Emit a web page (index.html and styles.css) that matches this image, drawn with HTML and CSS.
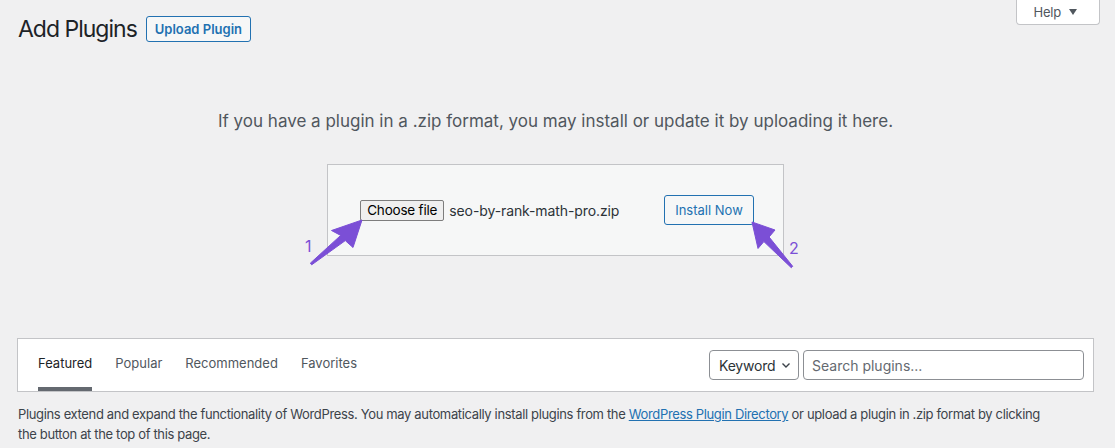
FILE: index.html
```html
<!DOCTYPE html>
<html lang="en">
<head>
    <meta charset="UTF-8">
    <meta name="viewport" content="width=device-width, initial-scale=1.0">
    <title>Add Plugins</title>
    <link rel="stylesheet" href="styles.css">
</head>
<body>
    <div class="screen-meta-links">
        <button class="show-settings">Help
            <svg width="8" height="6" viewBox="0 0 8 6"><path d="M0 0h8L4 6z" fill="#50575e"/></svg>
        </button>
    </div>

    <div class="wrap">
        <div class="page-head">
            <h1>Add Plugins</h1>
            <a class="page-title-action" href="#">Upload Plugin</a>
        </div>

        <div class="upload-plugin">
            <p class="install-help">If you have a plugin in a .zip format, you may install or update it by uploading it here.</p>
            <div class="upload-row">
                <form class="wp-upload-form">
                    <div class="file-field">
                        <span class="file-btn">Choose file</span>
                        <span class="file-name">seo-by-rank-math-pro.zip</span>
                    </div>
                    <button type="button" class="button">Install Now</button>
                </form>
            </div>
        </div>

        <div class="wp-filter">
            <ul class="filter-links">
                <li><a class="current" href="#">Featured</a></li>
                <li><a href="#">Popular</a></li>
                <li><a href="#">Recommended</a></li>
                <li><a href="#">Favorites</a></li>
            </ul>
            <div class="search-form">
                <div class="select">
                    <span>Keyword</span>
                    <svg class="chevron" width="10" height="7" viewBox="0 0 10 7"><path d="M1.5 1.5l3.5 3.5 3.5-3.5" fill="none" stroke="#3c434a" stroke-width="1.4"/></svg>
                </div>
                <input class="search-input" type="search" placeholder="Search plugins...">
            </div>
        </div>

        <p class="intro">Plugins extend and expand the functionality of WordPress. You may automatically install plugins from the <a href="#">WordPress Plugin Directory</a> or upload a plugin in .zip format by clicking the button at the top of this page.</p>
    </div>

    <!-- annotation arrows -->
    <svg class="marks" width="1115" height="448" viewBox="0 0 1115 448">
        <g fill="#7b4fd6" stroke="#7b4fd6" stroke-width="1" stroke-linejoin="round">
            <polygon points="362,220 331.5,230.5 340.7,235.4 310.3,263.2 311.7,264.8 345.3,240.6 353,247.5"/>
            <polygon points="752,222 775,230 769.1,237 792.7,266.3 791.3,267.7 763.9,241.6 758,248.5"/>
        </g>
        <text x="305" y="252" class="mark-num">1</text>
        <text x="789" y="254" class="mark-num">2</text>
    </svg>
</body>
</html>
```

FILE: styles.css
```css
body {
    margin: 0;
    padding: 0;
    background: #f0f0f1;
    color: #3c434a;
    font-family: Inter, "Noto Sans", sans-serif;
    font-size: 13px;
    position: relative;
    min-height: 448px;
}
a {
    color: #2271b1;
}
/* Help tab */
.screen-meta-links {
    float: right;
    margin-right: 15px;
}
.show-settings {
    display: flex;
    align-items: center;
    gap: 8px;
    height: 25px;
    padding: 0 22px 1px 16px;
    background: #fff;
    border: 1px solid #c3c4c7;
    border-top: none;
    border-radius: 0 0 4px 4px;
    color: #50575e;
    font-family: inherit;
    font-size: 13px;
    letter-spacing: -0.2px;
}
.wrap {
    padding: 16px 21px 0 17px;
}
.page-head {
    display: flex;
    align-items: center;
    gap: 9px;
}
.page-head h1 {
    margin: 0 0 0 1px;
    font-size: 23px;
    font-weight: 400;
    line-height: 26px;
    letter-spacing: -1px;
    color: #1d2327;
}
.page-title-action {
    padding: 0 8px;
    line-height: 24px;
    border: 1px solid #2271b1;
    border-radius: 3px;
    background: #f6f7f7;
    font-size: 13px;
    font-weight: 600;
    text-decoration: none;
}
/* Upload box */
.upload-plugin {
    text-align: center;
}
.install-help {
    margin: 67px 0 31px;
    font-size: 17px;
    line-height: 24px;
    color: #50575e;
}
.upload-row {
    display: flex;
    justify-content: center;
}
.wp-upload-form {
    display: flex;
    align-items: center;
    margin: 0;
    padding: 30px 29px 30px 32px;
    border: 1px solid #c3c4c7;
    background: #f6f7f7;
}
.file-field {
    display: flex;
    align-items: center;
    gap: 5px;
    width: 304px;
}
.file-btn {
    padding: 0 6px;
    height: 19px;
    line-height: 19px;
    border: 1px solid #7d7d7d;
    border-radius: 2px;
    background: #efefef;
    color: #000;
    font-size: 13.5px;
    letter-spacing: -0.2px;
}
.file-name {
    color: #2c3338;
    font-size: 14px;
    letter-spacing: -0.1px;
}
.button {
    height: 30px;
    padding: 0 10px;
    border: 1px solid #2271b1;
    border-radius: 3px;
    background: #f6f7f7;
    color: #2271b1;
    font-family: inherit;
    font-size: 13px;
}
/* Filter bar */
.wp-filter {
    display: flex;
    justify-content: space-between;
    align-items: center;
    margin-top: 82px;
    padding: 0 9px 0 20px;
    background: #fff;
    border: 1px solid #c3c4c7;
}
.filter-links {
    display: flex;
    gap: 23px;
    margin: 0;
    padding: 0;
    list-style: none;
}
.filter-links a {
    display: block;
    padding: 15px 0;
    line-height: 18px;
    border-bottom: 4px solid #fff;
    color: #50575e;
    text-decoration: none;
}
.filter-links a.current {
    color: #1d2327;
    border-bottom-color: #646970;
}
.search-form {
    display: flex;
    gap: 4px;
}
.select {
    display: flex;
    align-items: center;
    justify-content: space-between;
    box-sizing: border-box;
    height: 30px;
    width: 90px;
    padding: 0 7px 0 9px;
    border: 1px solid #8c8f94;
    border-radius: 4px;
    background: #fff;
    color: #2c3338;
    font-size: 14px;
    letter-spacing: -0.2px;
}
.chevron {
    flex: none;
}
.search-input {
    box-sizing: border-box;
    width: 281px;
    height: 30px;
    padding: 0 8px;
    border: 1px solid #8c8f94;
    border-radius: 4px;
    font-family: inherit;
    font-size: 14px;
    color: #2c3338;
}
.search-input::placeholder {
    color: #646970;
}
.intro {
    max-width: 1022px;
    margin: 12px 0 0 1px;
    line-height: 20px;
    letter-spacing: -0.35px;
}
/* Annotations */
.marks {
    position: absolute;
    top: 0;
    left: 0;
    pointer-events: none;
}
.mark-num {
    fill: #7b4fd6;
    font-family: Inter, sans-serif;
    font-size: 16px;
}
```
